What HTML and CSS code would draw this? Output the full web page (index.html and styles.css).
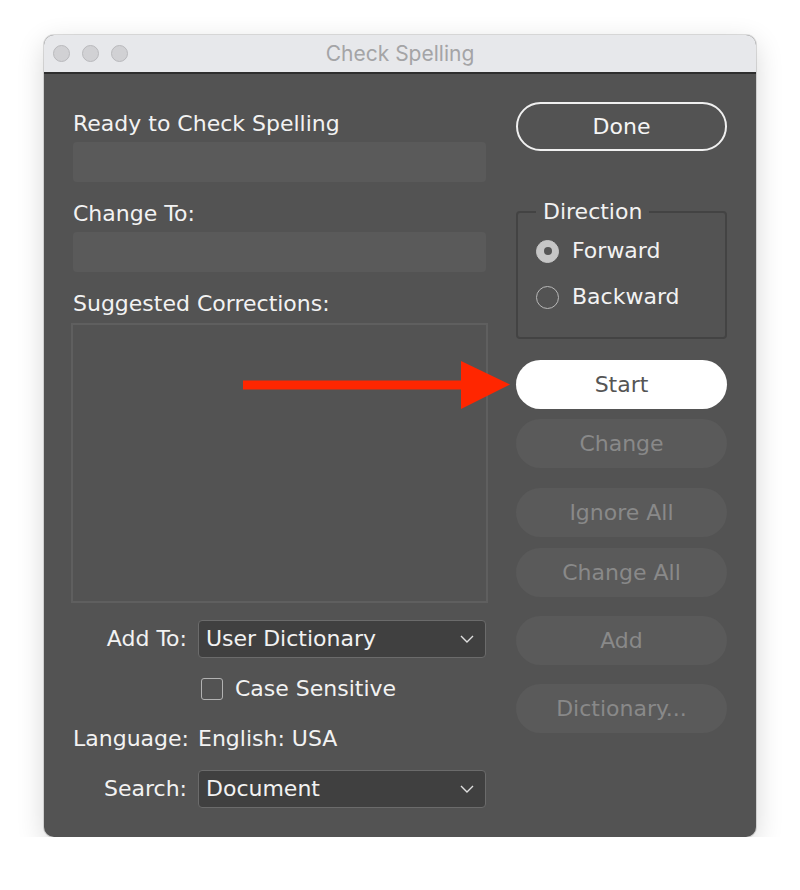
FILE: index.html
```html
<!DOCTYPE html>
<html lang="en">
<head>
  <meta charset="UTF-8">
  <meta name="viewport" content="width=device-width, initial-scale=1.0">
  <title>Check Spelling</title>
  <link rel="stylesheet" href="styles.css">
</head>
<body>
  <div class="window">
    <!-- タイトルバー -->
    <div class="titlebar">
      <div class="lights">
        <span class="light"></span>
        <span class="light"></span>
        <span class="light"></span>
      </div>
      <div class="title">Check Spelling</div>
      <div></div>
    </div>

    <div class="content">
      <!-- 左側 -->
      <div class="left">
        <div class="label">Ready to Check Spelling</div>
        <div class="field"></div>

        <div class="label gap">Change To:</div>
        <div class="field"></div>

        <div class="label gap">Suggested Corrections:</div>
        <div class="listbox"></div>

        <div class="options">
          <div class="opt-label">Add To:</div>
          <div class="select">
            <span>User Dictionary</span>
            <svg class="chevron" width="14" height="8" viewBox="0 0 14 8"><path d="M1 1 L7 7 L13 1" fill="none" stroke="#e0e0e0" stroke-width="1.4"/></svg>
          </div>

          <div></div>
          <label class="check">
            <span class="box"></span>
            <span>Case Sensitive</span>
          </label>

          <div class="opt-label">Language:</div>
          <div class="opt-value">English: USA</div>

          <div class="opt-label">Search:</div>
          <div class="select">
            <span>Document</span>
            <svg class="chevron" width="14" height="8" viewBox="0 0 14 8"><path d="M1 1 L7 7 L13 1" fill="none" stroke="#e0e0e0" stroke-width="1.4"/></svg>
          </div>
        </div>
      </div>

      <!-- 右側 -->
      <div class="right">
        <button class="btn outline" id="done">Done</button>

        <fieldset class="direction">
          <legend>Direction</legend>
          <div class="radio-row">
            <span class="radio on"></span>
            <span>Forward</span>
          </div>
          <div class="radio-row">
            <span class="radio"></span>
            <span>Backward</span>
          </div>
        </fieldset>

        <button class="btn primary" id="start">Start</button>
        <button class="btn disabled" id="change">Change</button>
        <button class="btn disabled" id="ignore_all">Ignore All</button>
        <button class="btn disabled" id="change_all">Change All</button>
        <button class="btn disabled" id="add">Add</button>
        <button class="btn disabled" id="dictionary">Dictionary...</button>
      </div>
    </div>

    <!-- 矢印 -->
    <svg class="arrow" width="268" height="49" viewBox="0 0 268 49">
      <rect x="0" y="19.5" width="222" height="9" fill="#ff2600"/>
      <polygon points="218,0 267,23.5 218,48" fill="#ff2600"/>
    </svg>
  </div>
</body>
</html>
```

FILE: styles.css
```css
/* スタイルシート */
body{
  margin: 0;
  padding: 35px 0 0 44px;
  background-color: #fff;
  font-family: "DejaVu Sans", sans-serif;
}
.window{
  position: relative;
  width: 712px;
  height: 802px;
  box-sizing: border-box;
  background-color: #535353;
  border-radius: 10px;
  overflow: hidden;
  box-shadow: 0 0 0 1px rgba(0, 0, 0, 0.12), 0 8px 28px rgba(0, 0, 0, 0.16);
}
.titlebar{
  height: 37px;
  background-color: #e7e8eb;
  border-bottom: 2px solid #2e2e2e;
  display: grid;
  grid-template-columns: 1fr auto 1fr;
  align-items: center;
}
.lights{
  display: flex;
  gap: 12px;
  padding-left: 9px;
}
.light{
  width: 15px;
  height: 15px;
  border-radius: 50%;
  background-color: #d1d1d4;
  border: 1px solid #b9b9bc;
}
.title{
  font-family: Inter, "Liberation Sans", sans-serif;
  font-size: 21px;
  color: #a4a4a6;
}
.content{
  display: flex;
  gap: 30px;
  padding: 28px 29px 0 29px;
  color: #f2f2f2;
  font-size: 22px;
}
.left{
  width: 413px;
  padding-top: 9px;
}
.right{
  width: 211px;
  display: flex;
  flex-direction: column;
}
.label{
  line-height: 26px;
  margin-bottom: 5px;
}
.label.gap{
  margin-top: 19px;
}
.field{
  height: 40px;
  border-radius: 4px;
  background-color: #5a5a5a;
}
.listbox{
  height: 280px;
  margin: 6px -2px 0 -2px;
  box-sizing: border-box;
  border: 2px solid #5f5f5f;
}
.options{
  margin-top: 17px;
  display: grid;
  grid-template-columns: 114px 1fr;
  grid-template-rows: repeat(4, 38px);
  column-gap: 11px;
  row-gap: 12px;
  align-items: center;
  line-height: 26px;
}
.opt-label{
  text-align: right;
}
.select{
  height: 38px;
  box-sizing: border-box;
  border: 1.5px solid #6b6b6b;
  border-radius: 4px;
  background-color: #404040;
  display: flex;
  align-items: center;
  justify-content: space-between;
  padding: 0 11px 0 7px;
}
.check{
  display: flex;
  align-items: center;
  gap: 12px;
  padding-left: 3px;
}
.box{
  width: 22px;
  height: 22px;
  box-sizing: border-box;
  border: 1.5px solid #b2b2b2;
  border-radius: 3px;
}
.btn{
  height: 49px;
  width: 100%;
  border-radius: 25px;
  font-family: "DejaVu Sans", sans-serif;
  font-size: 22px;
  line-height: 26px;
  padding: 0;
  border: none;
}
.outline{
  background-color: transparent;
  border: 2px solid #f0f0f0;
  color: #f5f5f5;
}
.primary{
  margin-top: 21px;
  background-color: #fff;
  color: #555;
}
.disabled{
  background-color: #5a5a5a;
  color: #898989;
}
#change{ margin-top: 10px; }
#ignore_all{ margin-top: 20px; }
#change_all{ margin-top: 11px; }
#add{ margin-top: 19px; }
#dictionary{ margin-top: 19px; }
.direction{
  margin: 48px 0 0 0;
  padding: 8px 18px 22px 18px;
  border: 2px solid #434343;
  border-radius: 4px;
  legend {
    padding: 0 7px;
    line-height: 26px;
  }
}
.radio-row{
  height: 36px;
  display: flex;
  align-items: center;
  gap: 13px;
  line-height: 26px;
}
.radio-row + .radio-row{
  margin-top: 10px;
}
.radio{
  width: 23px;
  height: 23px;
  box-sizing: border-box;
  border-radius: 50%;
  border: 1.5px solid #b8b8b8;
}
.radio.on{
  background-color: #c6c6c6;
  border-color: #c6c6c6;
  display: flex;
  align-items: center;
  justify-content: center;
}
.radio.on::after{
  content: "";
  width: 8px;
  height: 8px;
  border-radius: 50%;
  background-color: #555;
}
.arrow{
  position: absolute;
  left: 199px;
  top: 326px;
}
```
